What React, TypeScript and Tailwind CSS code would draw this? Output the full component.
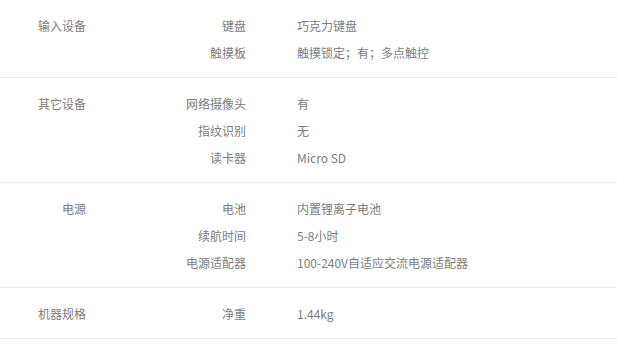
import React from "react";

const sections: { title: string; rows: [string, string][] }[] = [
  { title: "输入设备", rows: [["键盘", "巧克力键盘"], ["触摸板", "触摸锁定；有；多点触控"]] },
  { title: "其它设备", rows: [["网络摄像头", "有"], ["指纹识别", "无"], ["读卡器", "Micro SD"]] },
  { title: "电源", rows: [["电池", "内置锂离子电池"], ["续航时间", "5-8小时"], ["电源适配器", "100-240V自适应交流电源适配器"]] },
  { title: "机器规格", rows: [["净重", "1.44kg"]] },
];

export default function App() {
  return (
    <div
      className="w-[617px] h-[344px] bg-white text-[12px] text-[#7d7d7d] overflow-hidden"
      style={{ fontFamily: '"Noto Sans CJK SC", "Noto Sans", sans-serif' }}
    >
      {sections.map((s, i) => (
        <div key={i} className="flex border-b border-[#ebebeb] pt-[12px] pb-[11px]">
          <div className="w-[86px] shrink-0 text-right leading-[27px]">{s.title}</div>
          <div className="flex flex-col">
            {s.rows.map(([k, v], j) => (
              <div key={j} className="flex h-[27px] items-center">
                <div className="w-[160px] shrink-0 text-right">{k}</div>
                <div className="pl-[51px]">{v}</div>
              </div>
            ))}
          </div>
        </div>
      ))}
    </div>
  );
}
